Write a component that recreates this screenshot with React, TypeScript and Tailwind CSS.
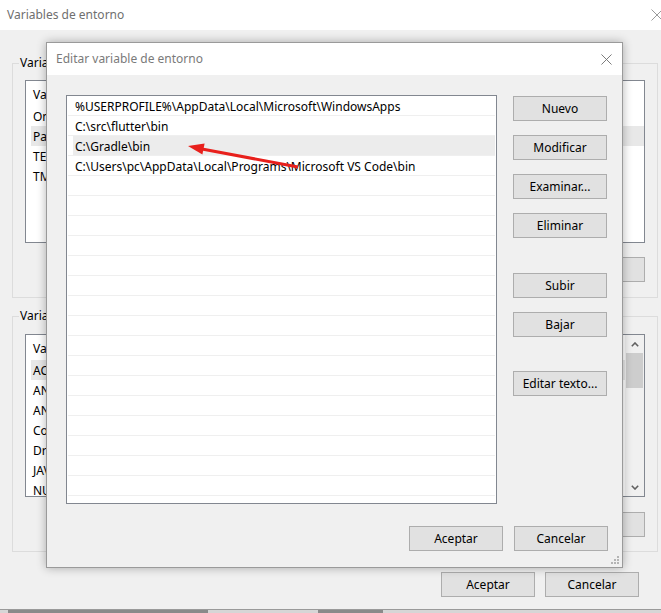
import React from 'react'

const Btn = ({ label, className = '' }: { label: string; className?: string }) => (
  <button
    className={`flex h-[25px] w-[94px] shrink-0 items-center justify-center border border-[#adadad] bg-[#e1e1e1] text-[12px] leading-none text-black ${className}`}
  >
    {label}
  </button>
)

const CloseX = ({ size, color }: { size: number; color: string }) => (
  <svg width={size} height={size} viewBox="0 0 12 12">
    <path d="M0.5 0.5L11.5 11.5M11.5 0.5L0.5 11.5" stroke={color} strokeWidth="1" />
  </svg>
)

const OuterList = ({
  rows,
  selected,
  scroll = false,
}: {
  rows: string[]
  selected: number
  scroll?: boolean
}) => (
  <div className="flex h-[163px] overflow-hidden border border-[#828790] bg-white">
    <div className="flex-1">
      <div className="flex h-[25px] items-center pl-[7px] pt-[2px] text-[12px]">
        <span className="w-[170px]">Variable</span>
        <span>Valor</span>
      </div>
      {rows.map((r, i) => (
        <div key={r} className="flex h-[20px] pl-[5px] text-[12px]">
          <div className={`flex flex-1 items-center pl-[2px] pt-[2px] ${i === selected ? 'bg-[#e8e8e8]' : ''}`}>
            {r}
          </div>
        </div>
      ))}
    </div>
    {scroll && (
      <div className="flex w-[19px] flex-col bg-[#f0f0f0]">
        <div className="flex h-[18px] items-center justify-center">
          <svg width="8" height="5" viewBox="0 0 8 5">
            <path d="M0.8 4.2L4 1L7.2 4.2" stroke="#606060" strokeWidth="1.6" fill="none" />
          </svg>
        </div>
        <div className="mx-[1px] h-[35px] bg-[#cdcdcd]" />
        <div className="flex-1" />
        <div className="flex h-[17px] items-center justify-center">
          <svg width="8" height="5" viewBox="0 0 8 5">
            <path d="M0.8 0.8L4 4L7.2 0.8" stroke="#606060" strokeWidth="1.6" fill="none" />
          </svg>
        </div>
      </div>
    )}
  </div>
)

const paths = [
  '%USERPROFILE%\\AppData\\Local\\Microsoft\\WindowsApps',
  'C:\\src\\flutter\\bin',
  'C:\\Gradle\\bin',
  'C:\\Users\\pc\\AppData\\Local\\Programs\\Microsoft VS Code\\bin',
]

const EditDialog = () => {
  const rows = [...paths, ...Array(17).fill('')]
  return (
    <div className="absolute left-[46px] top-[42px] flex h-[526px] w-[577px] flex-col border border-[#9a9a9a] bg-[#f0f0f0] shadow-[0_0_9px_rgba(0,0,0,0.3)]">
      <div className="flex h-[32px] items-center bg-white pl-[9px] pr-[10px]">
        <span className="text-[12px] text-[#7a7a7a]">Editar variable de entorno</span>
        <span className="ml-auto">
          <CloseX size={11} color="#707070" />
        </span>
      </div>
      <div className="flex pl-[19px] pt-[20px]">
        <div className="h-[409px] w-[431px] overflow-hidden border border-[#828790] bg-white px-[1px]">
          {rows.map((p, i) => (
            <div key={i} className="flex h-[20px] border-b border-[#efefef] text-[12px] text-black">
              <div className={`ml-[5px] flex flex-1 items-center pl-[2px] pt-[3px] ${i === 2 ? 'bg-[#ececec]' : ''}`}>
                {p}
              </div>
            </div>
          ))}
        </div>
        <div className="ml-[16px] flex flex-col pt-[1px]">
          <Btn label="Nuevo" />
          <Btn label="Modificar" className="mt-[14px]" />
          <Btn label="Examinar..." className="mt-[14px]" />
          <Btn label="Eliminar" className="mt-[14px]" />
          <Btn label="Subir" className="mt-[35px]" />
          <Btn label="Bajar" className="mt-[14px]" />
          <Btn label="Editar texto..." className="mt-[34px]" />
        </div>
      </div>
      <div className="mt-[22px] flex justify-end gap-[11px] pr-[14px]">
        <Btn label="Aceptar" />
        <Btn label="Cancelar" />
      </div>
      <div className="absolute bottom-[3px] right-[3px]">
        <svg width="8" height="8" viewBox="0 0 8 8">
          <g fill="#b4b4b4">
            <rect x="6" y="0" width="2" height="2" />
            <rect x="3" y="3" width="2" height="2" />
            <rect x="6" y="3" width="2" height="2" />
            <rect x="0" y="6" width="2" height="2" />
            <rect x="3" y="6" width="2" height="2" />
            <rect x="6" y="6" width="2" height="2" />
          </g>
        </svg>
      </div>
    </div>
  )
}

export default function App() {
  return (
    <div className="relative flex h-[613px] w-[661px] flex-col overflow-hidden bg-[#f0f0f0] font-['Noto_Sans','Segoe_UI',sans-serif] text-black">
      <div className="flex h-[30px] shrink-0 items-center bg-white pl-[7px]">
        <span className="text-[12px] text-[#6f6f6f]">Variables de entorno</span>
        <span className="ml-auto mr-[-2px]">
          <CloseX size={12} color="#9a9a9a" />
        </span>
      </div>

      <div className="flex flex-1 flex-col pl-[12px] pr-[3px]">
        <fieldset className="mt-[25px] border border-[#dcdcdc] px-[12px] pb-[15px] pt-[9px]">
          <legend className="-ml-[6px] px-[1px] text-[12px] leading-[16px]">
            Variables de usuario para pc
          </legend>
          <OuterList rows={['OneDrive', 'Path', 'TEMP', 'TMP']} selected={1} />
          <div className="mt-[14px] flex justify-end gap-[9px]">
            <Btn label="Nueva..." />
            <Btn label="Editar..." />
            <Btn label="Eliminar" />
          </div>
        </fieldset>

        <fieldset className="mt-[10px] border border-[#dcdcdc] px-[12px] pb-[14px] pt-[10px]">
          <legend className="-ml-[6px] px-[1px] text-[12px] leading-[16px]">
            Variables del sistema
          </legend>
          <OuterList
            rows={[
              'ACSvcPort',
              'ANDROID_HOME',
              'ANDROID_SDK_ROOT',
              'ComSpec',
              'DriverData',
              'JAVA_HOME',
              'NUMBER_OF_PROCESSORS',
            ]}
            selected={0}
            scroll
          />
          <div className="mt-[15px] flex justify-end gap-[9px]">
            <Btn label="Nueva..." />
            <Btn label="Editar..." />
            <Btn label="Eliminar" />
          </div>
        </fieldset>

        <div className="mt-[20px] flex justify-end gap-[10px] pr-[19px]">
          <Btn label="Aceptar" />
          <Btn label="Cancelar" />
        </div>
      </div>

      <div className="flex h-[4px] shrink-0 border-t border-[#9a9a9a] bg-[#d6d6d6]">
        <div className="ml-[8px] w-[200px] bg-[#8a8a8a]" />
        <div className="ml-[110px] w-[65px] bg-[#8a8a8a]" />
      </div>

      <EditDialog />

      <svg className="pointer-events-none absolute left-0 top-0" width="661" height="613">
        <line x1="298" y1="167" x2="202" y2="149" stroke="#e8201c" strokeWidth="3" />
        <polygon points="188,146 204.6,143.5 202.4,154.5" fill="#e8201c" />
      </svg>
    </div>
  )
}
